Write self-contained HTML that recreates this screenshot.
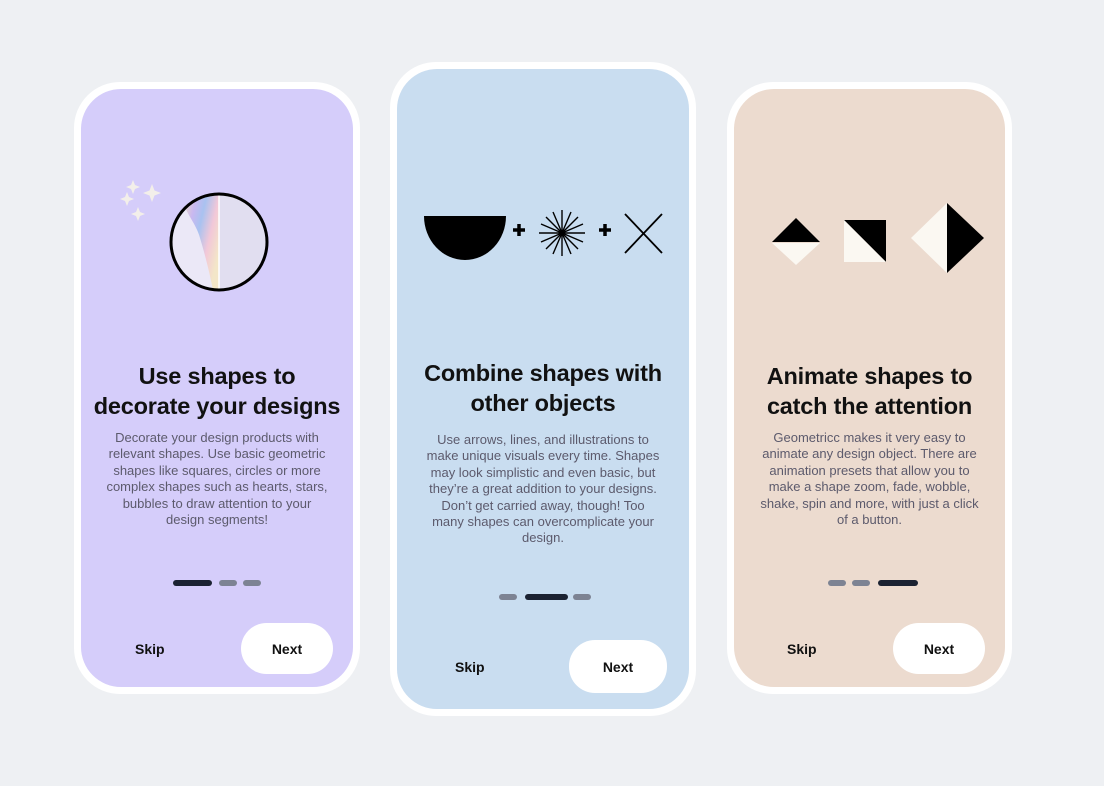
<!DOCTYPE html>
<html><head><meta charset="utf-8"><style>
*{margin:0;padding:0;box-sizing:border-box}
body{width:1104px;height:786px;background:#eef0f3;font-family:"Liberation Sans",sans-serif;position:relative;overflow:hidden}
.f{position:absolute;background:#fff;border-radius:46px}
.c{position:absolute;border-radius:40px;overflow:hidden}
.t{position:absolute;left:-10px;right:-10px;text-align:center;font-weight:bold;font-size:23.5px;line-height:30px;color:#111;letter-spacing:-0.2px;white-space:nowrap}
.b{position:absolute;left:-10px;right:-10px;text-align:center;font-size:13px;line-height:16.4px;color:#5c5a6c;white-space:nowrap}
.d{position:absolute;height:6px;border-radius:3px;background:#7d8393}
.d.a{background:#1b2232}
.s{position:absolute;font-weight:bold;font-size:14px;color:#111}
.n{position:absolute;background:#fff;border-radius:26px;font-weight:bold;font-size:14px;color:#111;display:flex;align-items:center;justify-content:center}
svg{position:absolute;left:0;top:0}
</style></head><body>
<div class="f" style="left:74px;top:82px;width:286px;height:612px"></div>
<div class="c" style="left:81px;top:89px;width:272px;height:598px;background:#d5cdfa;overflow:visible">
 <div class="t" style="top:272px">Use shapes to<br>decorate your designs</div>
 <div class="b" style="top:341px">Decorate your design products with<br>relevant shapes. Use basic geometric<br>shapes like squares, circles or more<br>complex shapes such as hearts, stars,<br>bubbles to draw attention to your<br>design segments!</div>
 <div class="d a" style="left:92px;top:491px;width:39px"></div>
 <div class="d" style="left:138px;top:491px;width:18px"></div>
 <div class="d" style="left:162px;top:491px;width:18px"></div>
 <div class="s" style="left:54px;top:552px">Skip</div>
 <div class="n" style="left:160px;top:534px;width:92px;height:51px">Next</div>
</div>
<div class="f" style="left:390px;top:62px;width:306px;height:654px"></div>
<div class="c" style="left:397px;top:69px;width:292px;height:640px;background:#c9ddf0;overflow:visible">
 <div class="t" style="top:289px">Combine shapes with<br>other objects</div>
 <div class="b" style="top:363px">Use arrows, lines, and illustrations to<br>make unique visuals every time. Shapes<br>may look simplistic and even basic, but<br>they’re a great addition to your designs.<br>Don’t get carried away, though! Too<br>many shapes can overcomplicate your<br>design.</div>
 <div class="d" style="left:102px;top:525px;width:18px"></div>
 <div class="d a" style="left:128px;top:525px;width:43px"></div>
 <div class="d" style="left:176px;top:525px;width:18px"></div>
 <div class="s" style="left:58px;top:590px">Skip</div>
 <div class="n" style="left:172px;top:571px;width:98px;height:53px">Next</div>
</div>
<div class="f" style="left:727px;top:82px;width:285px;height:612px"></div>
<div class="c" style="left:734px;top:89px;width:271px;height:598px;background:#ecdbcf;overflow:visible">
 <div class="t" style="top:272px">Animate shapes to<br>catch the attention</div>
 <div class="b" style="top:341px">Geometricc makes it very easy to<br>animate any design object. There are<br>animation presets that allow you to<br>make a shape zoom, fade, wobble,<br>shake, spin and more, with just a click<br>of a button.</div>
 <div class="d" style="left:94px;top:491px;width:18px"></div>
 <div class="d" style="left:118px;top:491px;width:18px"></div>
 <div class="d a" style="left:144px;top:491px;width:40px"></div>
 <div class="s" style="left:53px;top:552px">Skip</div>
 <div class="n" style="left:159px;top:534px;width:92px;height:51px">Next</div>
</div>
<svg width="1104" height="786" viewBox="0 0 1104 786">
 <defs><linearGradient id="g" x1="0" y1="0" x2="1" y2="0.6">
  <stop offset="0" stop-color="#f7e3b8"/><stop offset="0.3" stop-color="#c9b8f0"/><stop offset="0.5" stop-color="#a9c2f0"/><stop offset="0.75" stop-color="#f2c8d8"/><stop offset="1" stop-color="#f3e6c8"/></linearGradient>
 <clipPath id="cc"><circle cx="219" cy="242" r="48"/></clipPath></defs>
 <g fill="#f3efea">
  <path d="M133 180l2 5 5 2-5 2-2 5-2-5-5-2 5-2z"/>
  <path d="M152 184l2.5 6.5 6.5 2.5-6.5 2.5-2.5 6.5-2.5-6.5-6.5-2.5 6.5-2.5z"/>
  <path d="M127 192l2 5 5 2-5 2-2 5-2-5-5-2 5-2z"/>
  <path d="M138 207l2 5 5 2-5 2-2 5-2-5-5-2 5-2z"/>
 </g>
 <g clip-path="url(#cc)">
  <rect x="170" y="194" width="49" height="96" fill="#ebe8f7"/>
  <path d="M182 194 C182 210 196 222 200 238 C206 258 210 275 213 290 L219 290 L219 194z" fill="url(#g)"/>
  <rect x="219" y="194" width="49" height="96" fill="#e1def0"/>
  <line x1="219" y1="194" x2="219" y2="290" stroke="#fff" stroke-width="1.5"/>
 </g>
 <circle cx="219" cy="242" r="48" fill="none" stroke="#000" stroke-width="3"/>
 <path d="M424 216h82a41 44 0 0 1-82 0z" fill="#000"/>
 <path d="M519 224v12M513 230h12M605 224v12M599 230h12" stroke="#000" stroke-width="3.5"/>
 <g stroke="#000" stroke-width="1.4" transform="translate(562 233)">
  <line x1="-23" y1="0" x2="23" y2="0"/><line x1="0" y1="-23" x2="0" y2="23"/>
  <line x1="-16" y1="-16" x2="16" y2="16"/><line x1="-16" y1="16" x2="16" y2="-16"/>
  <line x1="-21" y1="-9" x2="21" y2="9"/><line x1="-21" y1="9" x2="21" y2="-9"/>
  <line x1="-9" y1="-21" x2="9" y2="21"/><line x1="9" y1="-21" x2="-9" y2="21"/>
 </g>
 <path d="M625 214L662 253M662 214L625 253" stroke="#000" stroke-width="1.8"/>
 <path d="M772 242l24-24 24 24z" fill="#000"/>
 <path d="M772 243l24 22 24-22z" fill="#fbf8f2"/>
 <path d="M844 220h42v42z" fill="#000"/>
 <path d="M844 220v42h42z" fill="#fbf8f2"/>
 <path d="M947 203l-36 35 36 35z" fill="#fbf8f2"/>
 <path d="M947 203l37 35-37 35z" fill="#000"/>
</svg>
</body></html>
